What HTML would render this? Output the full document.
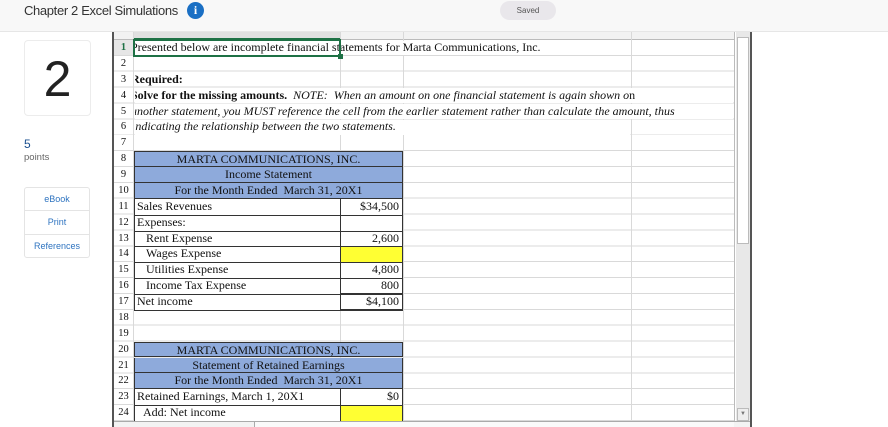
<!DOCTYPE html>
<html><head><meta charset="utf-8"><style>
*{margin:0;padding:0;box-sizing:border-box}
body{width:888px;height:427px;overflow:hidden;background:#fff;position:relative;font-family:"Liberation Sans",sans-serif}
.hdr{position:absolute;left:0;top:0;width:888px;height:32px;background:#f8f8f8;border-bottom:1px solid #e6e6e6}
.title{position:absolute;left:24px;top:2px;font-size:13px;letter-spacing:-0.35px;color:#333;line-height:18px}
.info{position:absolute;left:187px;top:2px;width:17px;height:17px;border-radius:50%;background:#1a6fc4;color:#fff;font:bold 12px/17px "Liberation Serif",serif;text-align:center}
.saved{position:absolute;left:500px;top:1px;width:56px;height:19px;border-radius:10px;background:#e9e7eb;color:#555;font-size:8px;line-height:19px;text-align:center}
.num{position:absolute;left:24px;top:40px;width:67px;height:76px;border:1px solid #ececec;border-radius:4px;font-size:50px;color:#222;text-align:center;line-height:76px}
.pts{position:absolute;left:24px;font-size:11px}
.btns{position:absolute;left:24px;top:187px;width:66px;height:71px;border:1px solid #e4e4e4;border-radius:3px}
.btns div{height:23.3px;border-bottom:1px solid #e4e4e4;font-size:9px;color:#2f74c0;text-align:center;line-height:23px}
.btns div:last-child{border:none}
.sheet{position:absolute;left:114px;top:40px;width:621px;height:381px;background:repeating-linear-gradient(to bottom,transparent 0,transparent 14.875px,#d9d9d9 14.875px,#d9d9d9 15.875px)}
.v{position:absolute;top:32px;height:390px;width:1px;background:#d9d9d9}
.t{position:absolute;font:12px/15.875px "Liberation Serif",serif;color:#111;white-space:nowrap}
.rn{position:absolute;left:114px;width:19px;text-align:center;font:10.5px/15.875px "Liberation Serif",serif;color:#111}
.blue{position:absolute;left:134px;width:269px;height:15.875px;background:#8eaadb;border:1px solid #333;border-top:none;text-align:center;font:12px/15px "Liberation Serif",serif;color:#111}
.hl{position:absolute;left:134px;width:269px;height:1px;background:#333}
.r{text-align:right;width:60px}
.m{position:absolute;background:#fff;height:14.6px}
</style></head><body>
<div class="hdr"><div class="title">Chapter 2 Excel Simulations</div><div class="info">i</div><div class="saved">Saved</div></div>
<div class="num">2</div>
<div class="pts" style="top:137px;color:#1a4f8f;font-size:12px">5</div>
<div class="pts" style="top:152px;color:#666;font-size:9.5px">points</div>
<div class="btns"><div>eBook</div><div>Print</div><div>References</div></div>

<div style="position:absolute;left:114px;top:32px;width:621px;height:8px;background:#f2f2f2;border-bottom:1px solid #bbb"></div>
<div style="position:absolute;left:134px;top:32px;width:206px;height:8px;background:#e0e0e0;border-bottom:2px solid #1e7145"></div>
<div style="position:absolute;left:114px;top:40px;width:19px;height:16px;background:#e6e6e6"></div>
<div class="sheet"></div>
<div class="v" style="left:133px"></div><div class="v" style="left:340px"></div><div class="v" style="left:403px"></div><div class="v" style="left:631px"></div><div class="v" style="left:734px;background:#bbb"></div>
<!-- masks for overflowing text -->
<div class="m" style="left:135px;top:40.5px;width:495px"></div>
<div class="m" style="left:135px;top:88px;width:598px"></div>
<div class="m" style="left:135px;top:104px;width:598px"></div>
<div class="m" style="left:135px;top:120px;width:495px"></div>
<div style="position:absolute;left:112px;top:32px;width:2px;height:395px;background:#555"></div>
<div style="position:absolute;left:736px;top:32px;width:14px;height:390px;background:#e8e8e8"></div>
<div style="position:absolute;left:737px;top:37px;width:12px;height:207px;background:#fff;border:1px solid #bbb"></div>
<div style="position:absolute;left:737px;top:408px;width:12px;height:13px;background:#eee;border:1px solid #bbb;font-size:6px;color:#777;text-align:center;line-height:11px">▼</div>
<div style="position:absolute;left:750px;top:32px;width:2px;height:395px;background:#555"></div>
<div style="position:absolute;left:114px;top:421px;width:636px;height:6px;background:#f3f3f3;border-top:1px solid #aaa"></div>
<div style="position:absolute;left:254px;top:422px;width:480px;height:5px;background:#fafafa;border-left:1px solid #aaa"></div>

<div class="rn" style="top:40px;color:#1e7145;font-weight:bold">1</div>
<div class="rn" style="top:55.9px">2</div><div class="rn" style="top:71.75px">3</div><div class="rn" style="top:87.6px">4</div><div class="rn" style="top:103.5px">5</div><div class="rn" style="top:119.4px">6</div><div class="rn" style="top:135.25px">7</div><div class="rn" style="top:151.1px">8</div><div class="rn" style="top:167px">9</div><div class="rn" style="top:182.9px">10</div><div class="rn" style="top:198.75px">11</div><div class="rn" style="top:214.6px">12</div><div class="rn" style="top:230.5px">13</div><div class="rn" style="top:246.4px">14</div><div class="rn" style="top:262.25px">15</div><div class="rn" style="top:278.1px">16</div><div class="rn" style="top:294px">17</div><div class="rn" style="top:309.9px">18</div><div class="rn" style="top:325.75px">19</div><div class="rn" style="top:341.6px">20</div><div class="rn" style="top:357.5px">21</div><div class="rn" style="top:373.4px">22</div><div class="rn" style="top:389.25px">23</div><div class="rn" style="top:405.1px">24</div>

<div style="position:absolute;left:135px;top:40px;width:600px;height:100px;overflow:hidden">
<div class="t" style="left:-4px;top:0">Presented below are incomplete financial statements for Marta Communications, Inc.</div>
<div class="t" style="left:-4px;top:31.75px;font-weight:bold">Required:</div>
<div class="t" style="left:-4px;top:47.6px"><b>Solve for the missing amounts.</b>&nbsp; <i>NOTE:&nbsp; When an amount on one financial statement is again shown o</i>n</div>
<div class="t" style="left:-4px;top:63.5px;font-style:italic">another statement, you MUST reference the cell from the earlier statement rather than calculate the amount, thus</div>
<div class="t" style="left:-3px;top:79.4px;font-style:italic">indicating the relationship between the two statements.</div>
</div>
<div style="position:absolute;left:133px;top:39px;width:208px;height:18px;border:2px solid #1e7145"></div>
<div style="position:absolute;left:338px;top:54px;width:5px;height:5px;background:#1e7145"></div>

<div style="position:absolute;left:134px;top:198.75px;width:269px;height:111px;background:#fff"></div>
<div class="blue" style="top:151.1px;border-top:1px solid #333">MARTA COMMUNICATIONS, INC.</div>
<div class="blue" style="top:167px">Income Statement</div>
<div class="blue" style="top:182.9px">For the Month Ended&nbsp; March 31, 20X1</div>
<div style="position:absolute;left:340px;top:246.4px;width:63px;height:15.9px;background:#ffff33"></div>
<div class="hl" style="top:214.6px"></div><div class="hl" style="top:230.5px"></div><div class="hl" style="top:246.4px"></div><div class="hl" style="top:262.25px"></div><div class="hl" style="top:278.1px"></div><div class="hl" style="top:294px"></div><div class="hl" style="top:309.9px"></div>
<div style="position:absolute;left:340px;top:293px;width:63px;height:2px;background:#333"></div>
<div style="position:absolute;left:340px;top:309px;width:63px;height:2px;background:#333"></div>
<div style="position:absolute;left:134px;top:198.75px;width:1px;height:111px;background:#333"></div>
<div style="position:absolute;left:340px;top:198.75px;width:1px;height:111px;background:#333"></div>
<div style="position:absolute;left:402px;top:198.75px;width:1px;height:111px;background:#333"></div>
<div class="t" style="left:137px;top:198.75px">Sales Revenues</div>
<div class="t" style="left:137px;top:214.6px">Expenses:</div>
<div class="t" style="left:146px;top:230.5px">Rent Expense</div>
<div class="t" style="left:146px;top:246.4px">Wages Expense</div>
<div class="t" style="left:146px;top:262.25px">Utilities Expense</div>
<div class="t" style="left:146px;top:278.1px">Income Tax Expense</div>
<div class="t" style="left:137px;top:294px">Net income</div>
<div class="t r" style="left:339px;top:198.75px">$34,500</div>
<div class="t r" style="left:339px;top:230.5px">2,600</div>
<div class="t r" style="left:339px;top:262.25px">4,800</div>
<div class="t r" style="left:339px;top:278.1px">800</div>
<div class="t r" style="left:339px;top:294px">$4,100</div>

<div style="position:absolute;left:134px;top:389.25px;width:269px;height:32px;background:#fff"></div>
<div class="blue" style="top:341.6px;border-top:1px solid #333">MARTA COMMUNICATIONS, INC.</div>
<div class="blue" style="top:357.5px">Statement of Retained Earnings</div>
<div class="blue" style="top:373.4px">For the Month Ended&nbsp; March 31, 20X1</div>
<div style="position:absolute;left:340px;top:405.1px;width:63px;height:16px;background:#ffff33"></div>
<div class="hl" style="top:405.1px"></div>
<div style="position:absolute;left:134px;top:389.25px;width:1px;height:32px;background:#333"></div>
<div style="position:absolute;left:340px;top:389.25px;width:1px;height:32px;background:#333"></div>
<div style="position:absolute;left:402px;top:389.25px;width:1px;height:32px;background:#333"></div>
<div class="t" style="left:137px;top:389.25px">Retained Earnings, March 1, 20X1</div>
<div class="t" style="left:143px;top:405.1px">Add: Net income</div>
<div class="t r" style="left:339px;top:389.25px">$0</div>
</body></html>
